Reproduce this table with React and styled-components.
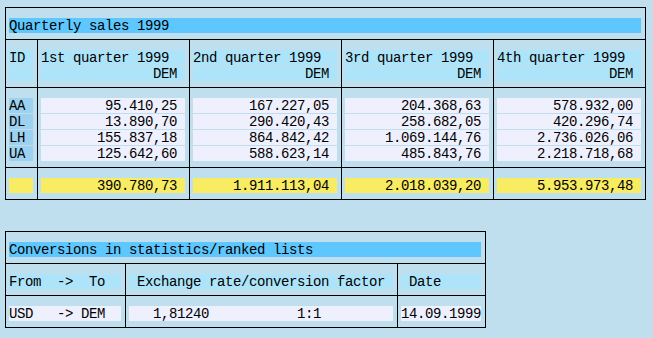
import React from "react";
import styled, { createGlobalStyle } from "styled-components";

const Global = createGlobalStyle`
  html, body { margin: 0; padding: 0; background: #bfdfef; }
  body { font-family: "Liberation Mono", "DejaVu Sans Mono", monospace; font-size: 14px; letter-spacing: -0.4px; color: #000; }
`;

const Page = styled.div`
  padding: 7px 0 0 5px;
  display: flex;
  flex-direction: column;
  align-items: flex-start;
  gap: 31px;
`;

const Box = styled.div`
  border: 1px solid #000;
  width: ${(p) => p.$width}px;
  box-sizing: border-box;
`;

const Section = styled.div`
  padding: 10px 4px 6px 3px;
`;

const Row = styled.div`
  display: grid;
  grid-template-columns: ${(p) => p.$cols};
  border-top: 1px solid #000;
`;

const Cell = styled.div`
  padding: 10px 4px 6px 3px;
  display: flex;
  flex-direction: column;
  gap: 1px;
  & + & { border-left: 1px solid #000; }
`;

const Field = styled.div`
  height: 15px;
  line-height: 16px;
  white-space: pre;
  overflow: hidden;
  background: ${(p) =>
    p.$kind === "title" ? "#5ec8fe"
    : p.$kind === "head" ? "#aee4f9"
    : p.$kind === "key" ? "#9dd1f0"
    : p.$kind === "total" ? "#f8ec62"
    : "#eef0fe"};
  text-align: ${(p) => (p.$right ? "right" : "left")};
  padding-right: ${(p) => (p.$right ? "8px" : "0")};
`;

const quarters = [
  "1st quarter 1999",
  "2nd quarter 1999",
  "3rd quarter 1999",
  "4th quarter 1999",
];

const ids = ["AA", "DL", "LH", "UA"];

const data = [
  ["95.410,25", "13.890,70", "155.837,18", "125.642,60"],
  ["167.227,05", "290.420,43", "864.842,42", "588.623,14"],
  ["204.368,63", "258.682,05", "1.069.144,76", "485.843,76"],
  ["578.932,00", "420.296,74", "2.736.026,06", "2.218.718,68"],
];

const totals = ["390.780,73", "1.911.113,04", "2.018.039,20", "5.953.973,48"];

const cols1 = "31px repeat(4, 152px)";
const cols2 = "119px 272px 88px";

export default function App() {
  return (
    <>
      <Global />
      <Page>
        <Box $width={641}>
          <Section>
            <Field $kind="title">Quarterly sales 1999</Field>
          </Section>
          <Row $cols={cols1}>
            <Cell>
              <Field $kind="head">ID</Field>
              <Field $kind="head" />
            </Cell>
            {quarters.map((q) => (
              <Cell key={q}>
                <Field $kind="head">{q}</Field>
                <Field $kind="head" $right>DEM</Field>
              </Cell>
            ))}
          </Row>
          <Row $cols={cols1}>
            <Cell>
              {ids.map((id) => (
                <Field key={id} $kind="key">{id}</Field>
              ))}
            </Cell>
            {data.map((col, i) => (
              <Cell key={i}>
                {col.map((v, j) => (
                  <Field key={j} $right>{v}</Field>
                ))}
              </Cell>
            ))}
          </Row>
          <Row $cols={cols1}>
            <Cell>
              <Field $kind="total" />
            </Cell>
            {totals.map((t, i) => (
              <Cell key={i}>
                <Field $kind="total" $right>{t}</Field>
              </Cell>
            ))}
          </Row>
        </Box>

        <Box $width={481}>
          <Section>
            <Field $kind="title">Conversions in statistics/ranked lists</Field>
          </Section>
          <Row $cols={cols2}>
            <Cell>
              <Field $kind="head">{"From  ->  To"}</Field>
            </Cell>
            <Cell>
              <Field $kind="head">{" Exchange rate/conversion factor"}</Field>
            </Cell>
            <Cell>
              <Field $kind="head">{" Date"}</Field>
            </Cell>
          </Row>
          <Row $cols={cols2}>
            <Cell>
              <Field>{"USD   -> DEM"}</Field>
            </Cell>
            <Cell>
              <Field>{"   1,81240           1:1"}</Field>
            </Cell>
            <Cell>
              <Field>14.09.1999</Field>
            </Cell>
          </Row>
        </Box>
      </Page>
    </>
  );
}
